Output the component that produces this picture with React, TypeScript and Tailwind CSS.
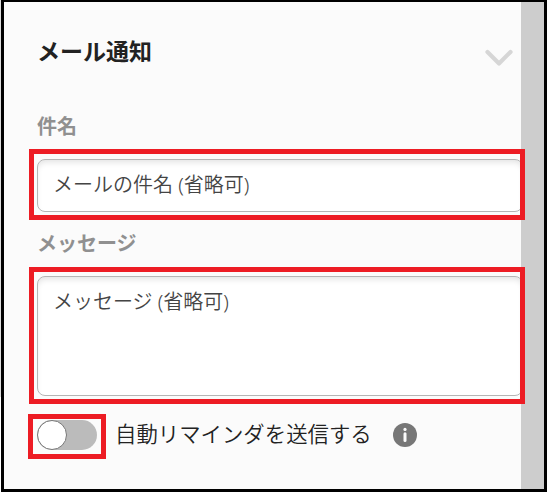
import type { ReactNode } from "react";

type HighlightProps = {
  className: string;
  children: ReactNode;
};

function Highlight({ className, children }: HighlightProps) {
  return <div className={`relative shrink-0 border-[5px] border-[#ed1c24] ${className}`}>{children}</div>;
}

function ChevronIcon() {
  return (
    <svg className="mt-[44px] h-[22px] w-[30px]" viewBox="0 0 30 22" fill="none" aria-hidden="true">
      <path d="M3.5 5.9 15 17.4 26.5 5.9" stroke="#d6d6d6" strokeWidth="4.2" strokeLinecap="round" strokeLinejoin="round" />
    </svg>
  );
}

function InfoIcon() {
  return (
    <svg className="mb-[3px] ml-[21px] h-6 w-6 shrink-0" viewBox="0 0 24 24" aria-hidden="true">
      <circle cx="12" cy="12" r="12" fill="#777777" />
      <circle cx="12" cy="6.4" r="1.6" fill="#fbfbfb" />
      <path d="M12 10.8v6.8" stroke="#fbfbfb" strokeWidth="3" strokeLinecap="round" />
    </svg>
  );
}

const fieldStyles =
  "block h-full w-[486px] resize-none rounded-[8px] border border-[#b5b5b5] bg-white px-[15px] text-[20px] font-[350] text-[#444444] placeholder-[#444444] shadow-[inset_0_4px_6px_-2px_rgba(0,0,0,0.12)] outline-none";

export default function App() {
  return (
    <main className="h-[492px] w-[547px] bg-linear-to-b from-[#dddddd] from-[397px] to-white to-[397px] pl-px font-['Noto_Sans','Noto_Sans_CJK_JP',sans-serif]">
      <div className="flex h-full border-x-[3px] border-t-2 border-b-[3px] border-black bg-[#cdcdcd]">
        <section className="flex w-[517px] shrink-0 flex-col bg-[#fbfbfb]">
          <header className="flex h-[106px] shrink-0 justify-between pr-[7px] pl-[33px]">
            <h1 className="mt-[32px] text-[23px] leading-[34px] font-bold text-[#222222]">メール通知</h1>
            <ChevronIcon />
          </header>

          <label htmlFor="subject" className="h-[41px] shrink-0 pt-[2px] pl-[33px] text-[20px] leading-[34px] font-bold text-[#909090]">
            件名
          </label>
          <Highlight className="ml-[25px] h-[71px] w-[496px]">
            <div className="h-full overflow-hidden pt-[5px] pb-[3px] pl-[3px]">
              <input id="subject" className={`${fieldStyles} pb-[2px]`} placeholder="メールの件名 (省略可)" />
            </div>
          </Highlight>

          <label htmlFor="message" className="h-[47px] shrink-0 pt-[7px] pl-[33px] text-[20px] leading-[34px] font-bold text-[#909090]">
            メッセージ
          </label>
          <Highlight className="ml-[25px] h-[137px] w-[496px]">
            <div className="h-full overflow-hidden pt-[4px] pb-[3px] pl-[3px]">
              <textarea id="message" className={`${fieldStyles} pt-[10px] leading-[30px]`} placeholder="メッセージ (省略可)" />
            </div>
          </Highlight>

          <div className="mt-[10px] ml-[24px] flex items-center">
            <Highlight className="h-[45px] w-[78px] pt-px pl-[4px]">
              <button type="button" role="switch" aria-checked="false" className="block h-[30px] w-[60px] rounded-full bg-[#bbbbbb]">
                <span className="block size-[30px] rounded-full border border-[#777777] bg-white" />
              </button>
            </Highlight>
            <span className="mb-[5px] ml-[9px] text-[21.4px] leading-[30px] font-[350] whitespace-nowrap text-[#222222]">自動リマインダを送信する</span>
            <InfoIcon />
          </div>
        </section>
      </div>
    </main>
  );
}
